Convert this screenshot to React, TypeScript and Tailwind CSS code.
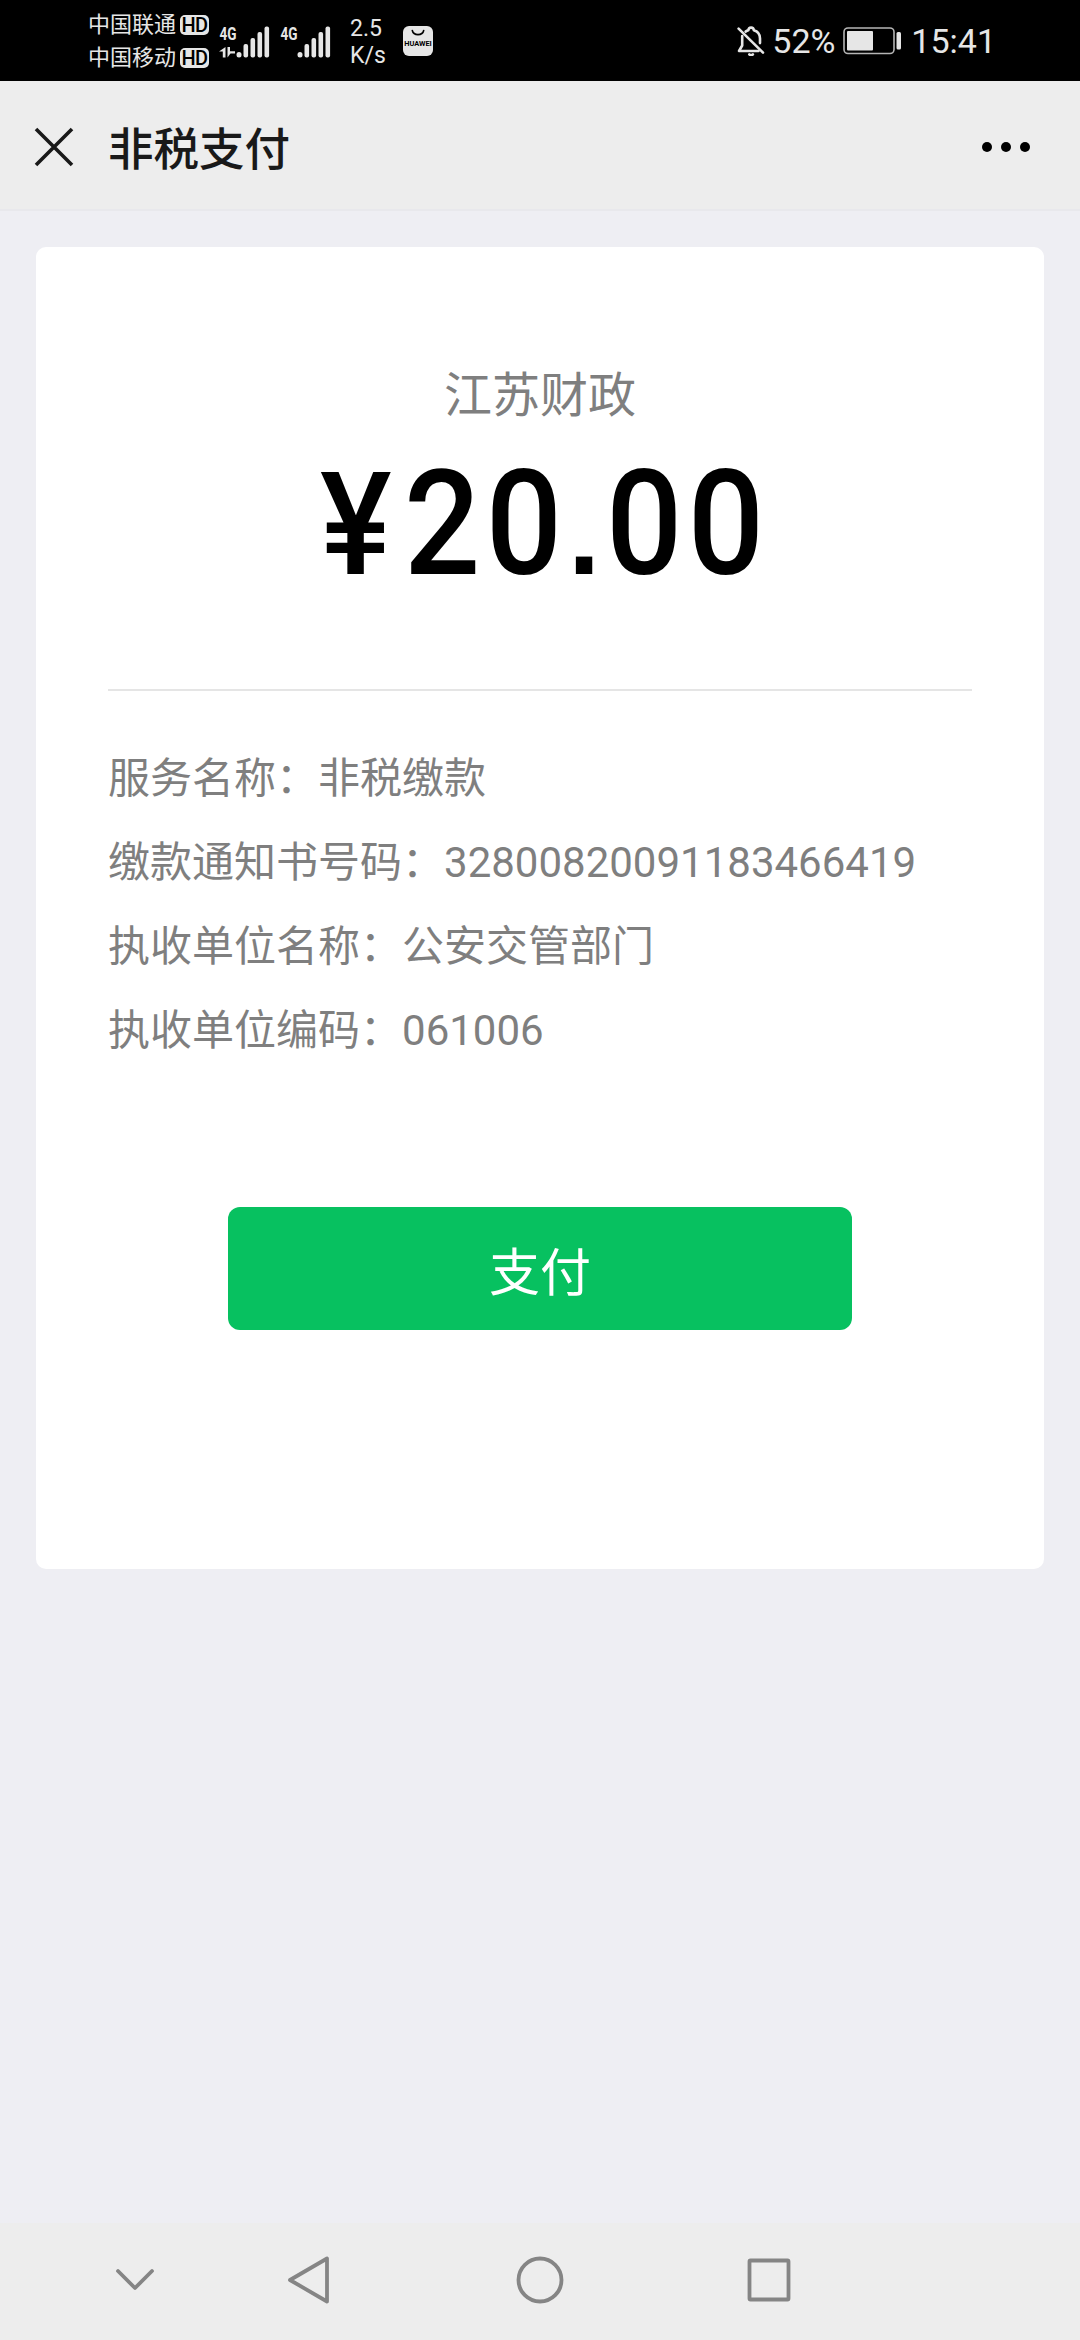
interface Detail {
  label: string
  value: string
}

const CARRIERS = ['中国联通', '中国移动']

const DETAILS: Detail[] = [
  { label: '服务名称', value: '非税缴款' },
  { label: '缴款通知书号码', value: '32800820091183466419' },
  { label: '执收单位名称', value: '公安交管部门' },
  { label: '执收单位编码', value: '061006' },
]

// ── Status bar ───────────────────────────────────────────────────────────────

function HdBadge() {
  return (
    <span className="flex h-5 w-[29px] items-center justify-center rounded-[5px] bg-[#e6e6e6] text-[20px] leading-none font-medium tracking-[-0.5px] text-black">
      HD
    </span>
  )
}

function Signal({ data = false }: { data?: boolean }) {
  return (
    <svg className="h-10 w-[52px] shrink-0 overflow-visible" viewBox="0 -6 52 40" fill="#e6e6e6">
      <text x="0.5" y="13.5" fontSize="19" fontWeight="700" textLength="17" lengthAdjust="spacingAndGlyphs">
        4G
      </text>
      {data && <path d="M6.5 21v10.5H3.8v-6H0zM8.5 21v10.500l3-4H16v-2.300h-5V21z" />}
      <rect x="17.5" y="26" width="5" height="5.5" rx="2.5" />
      <rect x="24.5" y="18" width="4.6" height="13.5" rx="2" />
      <rect x="31.5" y="12" width="4.6" height="19.5" rx="2" />
      <rect x="38.5" y="6" width="4.6" height="25.5" rx="2" />
      <rect x="45.5" y="0.5" width="4.6" height="31" rx="2" />
    </svg>
  )
}

function HuaweiIcon() {
  return (
    <svg className="ml-[18px] h-[30px] w-[30px]" viewBox="0 0 30 30">
      <rect width="30" height="30" rx="6" fill="#e6e6e6" />
      <path d="M9.3 4.5a5.8 5 0 0 0 11.4 0" fill="none" stroke="#000" strokeWidth="1.6" strokeLinecap="round" />
      <text x="1.2" y="20" fontSize="6.6" fontWeight="700" textLength="27.6" lengthAdjust="spacingAndGlyphs">
        HUAWEI
      </text>
    </svg>
  )
}

function BellOffIcon() {
  return (
    <svg className="h-[30px] w-7" viewBox="0 0 28 30" fill="none" stroke="#e6e6e6" strokeWidth="2.6" strokeLinecap="round" strokeLinejoin="round">
      <path d="M1.6 2.6 26 26.6" />
      <path d="M5.2 10v9.5L2 25h19.5" />
      <path d="M8.6 5.6c1-.7 1.7-1 2.8-1.3.2-3.6 5.2-3.6 5.4 0 4.2 1.2 6.2 4 6.2 8.2v4.6" />
      <path d="M12.3 28.3c1 1 2.6 1 3.6 0" />
    </svg>
  )
}

function BatteryIcon() {
  return (
    <svg className="ml-[9px] h-7 w-[59px]" viewBox="0 0 59 28">
      <rect x="1" y="1" width="50" height="25.5" rx="4" fill="none" stroke="#b5b5b5" strokeWidth="1.6" />
      <rect x="4" y="4" width="26" height="19.5" rx="1" fill="#e6e6e6" />
      <rect x="53.5" y="5" width="4.5" height="17.5" rx="1.5" fill="#e6e6e6" />
    </svg>
  )
}

function StatusBar() {
  return (
    <div className="flex h-[81px] shrink-0 items-center justify-between bg-black pr-[84px] pl-[88px] text-[#e6e6e6]">
      <div className="flex items-center">
        <div className="mt-[2px] flex flex-col">
          {CARRIERS.map((name) => (
            <div key={name} className="flex h-[33px] items-center gap-[4px] text-[22px] leading-none">
              <span>{name}</span>
              <HdBadge />
            </div>
          ))}
        </div>
        <div className="mb-px ml-[10px] flex gap-[9px]">
          <Signal data />
          <Signal />
        </div>
        <div className="mt-[2px] ml-[18px] w-[35px] text-[23px] leading-[27px]">
          <div>2.5</div>
          <div>K/s</div>
        </div>
        <HuaweiIcon />
      </div>
      <div className="flex items-center text-[34px] leading-none">
        <BellOffIcon />
        <span className="ml-[7px] w-[62px]">52%</span>
        <BatteryIcon />
        <span className="ml-[9px]">15:41</span>
      </div>
    </div>
  )
}

// ── Title bar ────────────────────────────────────────────────────────────────

function TitleBar() {
  return (
    <header className="flex h-[130px] shrink-0 items-center border-b-2 border-[#e8e8ec] bg-[#ededed] pt-[3px] pr-[50px] pl-[34px]">
      <button aria-label="关闭">
        <svg className="h-10 w-10" viewBox="0 0 40 40" fill="none" stroke="#191919" strokeWidth="3.6">
          <path d="M2 2l36 36M38 2 2 38" />
        </svg>
      </button>
      <h1 className="mt-[8px] ml-[34px] text-[45.5px] leading-none font-medium text-[#191919]">非税支付</h1>
      <button aria-label="更多" className="ml-auto flex gap-[9px]">
        <i className="size-[10px] rounded-full bg-black" />
        <i className="size-[10px] rounded-full bg-black" />
        <i className="size-[10px] rounded-full bg-black" />
      </button>
    </header>
  )
}

// ── Payment card ─────────────────────────────────────────────────────────────

function Amount({ yuan, cents }: { yuan: string; cents: string }) {
  return (
    <p className="mt-[17px] flex items-baseline justify-center pl-[9px] text-[146px] leading-[160px] font-medium text-black">
      <span className="w-[84px] origin-left scale-x-95 text-[142px]">¥</span>
      <span className="w-[163px] origin-left scale-x-92 tracking-[6px]">{yuan}</span>
      <span className="w-[39px] pl-px font-['Liberation_Sans'] text-[116px] leading-none font-bold">.</span>
      <span className="w-[163px] origin-left scale-x-92 tracking-[6px]">{cents}</span>
    </p>
  )
}

function PaymentCard() {
  return (
    <section className="mx-9 mt-9 flex h-[1322px] flex-col rounded-[10px] bg-white px-[72px] pt-[117px]">
      <p className="text-center text-[48px] leading-[64px] text-[#7f7f7f]">江苏财政</p>
      <Amount yuan="20" cents="00" />
      <hr className="mt-[83px] border-t-2 border-[#e5e5e5]" />
      <dl className="mt-[46px] text-[42px] leading-[84px] text-[#7f7f7f]">
        {DETAILS.map(({ label, value }) => (
          <div key={label} className="flex">
            <dt>{label}：</dt>
            <dd>{value}</dd>
          </div>
        ))}
      </dl>
      <button className="mx-auto mt-[134px] h-[123px] w-[624px] shrink-0 rounded-xl bg-[#07c160] pt-[11px] text-[51px] text-white">
        支付
      </button>
    </section>
  )
}

// ── System navigation ────────────────────────────────────────────────────────

function NavBar() {
  return (
    <nav className="mt-auto flex h-[117px] shrink-0 items-center bg-[#ededed] pb-[3px] pl-[110px]">
      <svg className="h-[60px] w-[690px]" viewBox="110 2250 690 60" fill="none" stroke="#858585" strokeWidth="3.8" strokeLinecap="round" strokeLinejoin="round">
        <path d="M118 2271l17 17 17-17" />
        <path d="M327 2258.5v43L290 2280z" />
        <circle cx="540" cy="2280" r="21.5" />
        <rect x="749.5" y="2260.5" width="39" height="39" rx="1" />
      </svg>
    </nav>
  )
}

// ── Page ─────────────────────────────────────────────────────────────────────

export default function App() {
  return (
    <div className="flex h-[2340px] w-[1080px] flex-col overflow-hidden bg-[#eeeef3] font-[Roboto,'Noto_Sans_CJK_SC',sans-serif]">
      <StatusBar />
      <TitleBar />
      <PaymentCard />
      <NavBar />
    </div>
  )
}
